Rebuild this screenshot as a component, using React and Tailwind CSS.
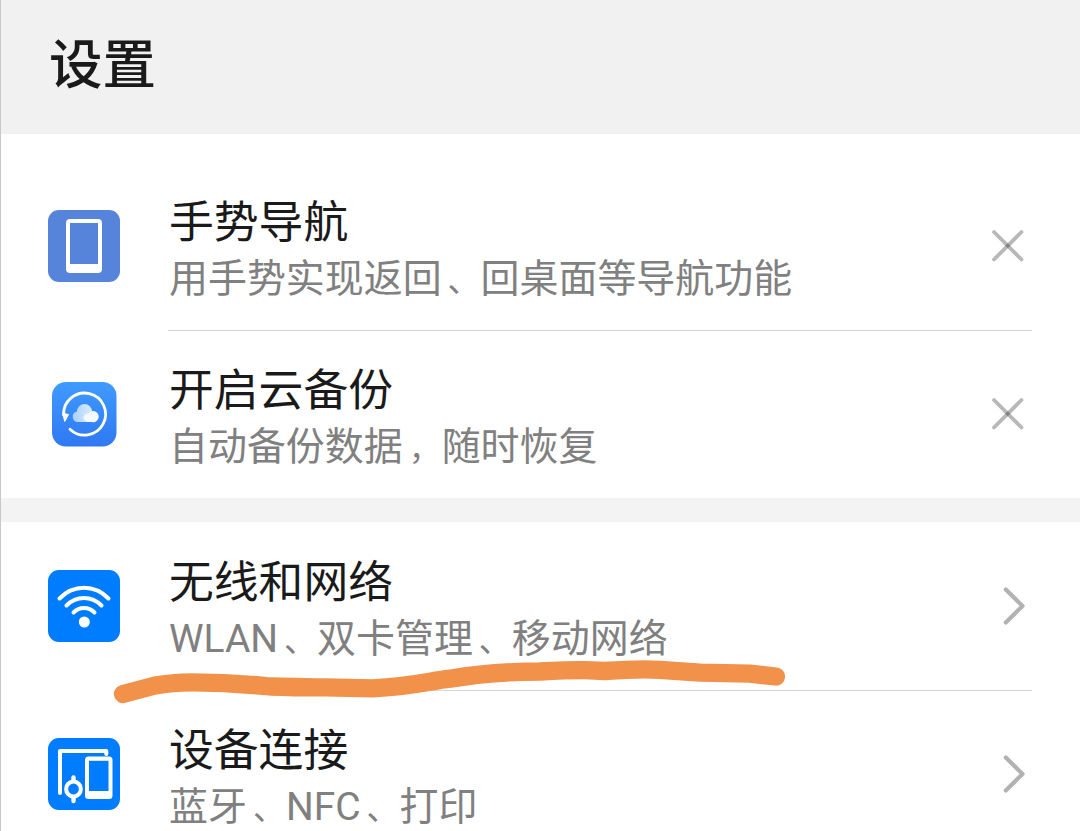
import React from "react";

function PhoneIcon() {
    return (
        <svg viewBox="0 0 72 72" className="w-[72px] h-[72px]">
            <rect width="72" height="72" rx="11" fill="#5684da" />
            <rect x="18" y="9" width="36" height="54" rx="4" fill="#fff" />
            <rect x="22" y="13" width="28" height="41" fill="#5684da" />
        </svg>
    );
}

function CloudIcon() {
    return (
        <svg viewBox="0 0 72 72" className="w-[72px] h-[72px]">
            <defs>
                <linearGradient id="cloudBg" x1="0" y1="0" x2="0" y2="1">
                    <stop offset="0" stopColor="#3f9bff" />
                    <stop offset="1" stopColor="#2f78f2" />
                </linearGradient>
                <linearGradient id="cloudFill" x1="0" y1="0" x2="1" y2="0">
                    <stop offset="0" stopColor="#a9d0ff" />
                    <stop offset="1" stopColor="#d9eaff" />
                </linearGradient>
            </defs>
            <rect x="4" y="4" width="64.5" height="64.5" rx="14" fill="url(#cloudBg)" />
            <path d="M22 51.2 A21 21 0 1 0 15.6 37" fill="none" stroke="#fff" strokeWidth="2.8" strokeLinecap="round" />
            <path d="M14.6 35.5 L20.6 36.4 L16.8 43.4 Z" fill="#fff" stroke="#fff" strokeWidth="1" strokeLinejoin="round" />
            <path d="M30 44 a5.3 5.3 0 0 1 -1 -10.5 a7.5 7.5 0 0 1 15 0 v10.5 Z" fill="url(#cloudFill)" />
            <path d="M40 44 a4.5 4.5 0 0 1 -4 -6.5 q1.5 -2.5 4.5 -2 a5.6 5.6 0 1 1 3 8.5 Z" fill="#f4f9ff" />
        </svg>
    );
}

function WifiIcon() {
    return (
        <svg viewBox="0 0 72 72" className="w-[72px] h-[72px]">
            <rect width="72" height="72" rx="11" fill="#007dff" />
            <g fill="none" stroke="#fff" strokeWidth="4" strokeLinecap="round">
                <path d="M11.5 28.5 C25.5 14.2 46.5 14.2 60.5 28.5" />
                <path d="M18.5 35.5 C28.5 25.5 43.5 25.5 53.5 35.5" />
                <path d="M25.5 42.5 C31.5 36.5 40.5 36.5 46.5 42.5" />
            </g>
            <circle cx="36.3" cy="52" r="5.5" fill="#fff" />
        </svg>
    );
}

function DevicesIcon() {
    return (
        <svg viewBox="0 0 72 72" className="w-[72px] h-[72px]">
            <rect width="72" height="72" rx="11" fill="#007dff" />
            <path d="M12 55 V13 H58.3 V16" fill="none" stroke="#fff" strokeWidth="4" strokeLinecap="round" strokeLinejoin="round" />
            <path d="M25.5 39.5 V63" stroke="#fff" strokeWidth="4.4" strokeLinecap="round" />
            <circle cx="25.5" cy="51" r="7.4" fill="#007dff" stroke="#fff" strokeWidth="4" />
            <rect x="37" y="18.5" width="27.5" height="42.5" rx="3.5" fill="#fff" />
            <rect x="41" y="22.8" width="19.5" height="30.2" fill="#007dff" />
        </svg>
    );
}

function CloseIcon() {
    return (
        <svg viewBox="0 0 48 48" className="w-12 h-12">
            <g stroke="#000" strokeOpacity="0.28" strokeWidth="3.8" strokeLinecap="round">
                <path d="M10 10 L37.5 37.5" />
                <path d="M37.5 10 L10 37.5" />
            </g>
        </svg>
    );
}

function ChevronIcon() {
    return (
        <svg viewBox="0 0 48 48" className="w-12 h-12">
            <path
                d="M21.8 7.5 L38.5 24 L21.8 40.5"
                fill="none"
                stroke="#b2b2b2"
                strokeWidth="4.2"
                strokeLinecap="round"
                strokeLinejoin="round"
            />
        </svg>
    );
}

// Punctuation is drawn a bit smaller and further right in its full-width cell
function Description({ text }) {
    return text.split(/([、，])/).map((part, i) =>
        part === "、" || part === "，" ? (
            <span key={i} className="inline-block w-[39px] pl-[6px] text-[32px] leading-none">{part}</span>
        ) : (
            <span key={i}>{part}</span>
        )
    );
}

function SettingRow({ icon, title, desc, action }) {
    return (
        <div className="flex h-[168px] pl-[47px] pr-12">
            <div className="flex items-center w-[120px] shrink-0">{icon}</div>
            <div className="flex flex-1 items-center justify-between">
                <div className="pt-[11px] pl-px whitespace-nowrap">
                    <div className="text-[44.8px] leading-[56px] text-[#1a1a1a]">{title}</div>
                    <div className="h-14 text-[38.95px] leading-[56px] text-[#808080]">
                        <Description text={desc} />
                    </div>
                </div>
                <button className="block">{action}</button>
            </div>
        </div>
    );
}

function Divider() {
    return <div className="h-px -mb-px ml-[167px] mr-12 bg-[#d6d6d6]" />;
}

function App() {
    return (
        <div className="relative w-[1080px] h-[831px] overflow-hidden bg-white border-l border-[#c8c8c8] font-['Roboto','Noto_Sans_CJK_SC',sans-serif]">
            <header className="h-[133.5px] bg-[#f1f1f1] pl-[48px] pt-[26px]">
                <h1 className="text-[53.5px] leading-[80px] font-medium text-[#1a1a1a]">设置</h1>
            </header>

            <section className="pt-7">
                <SettingRow icon={<PhoneIcon />} title="手势导航" desc="用手势实现返回、回桌面等导航功能" action={<CloseIcon />} />
                <Divider />
                <SettingRow icon={<CloudIcon />} title="开启云备份" desc="自动备份数据，随时恢复" action={<CloseIcon />} />
            </section>

            <div className="h-6 bg-[#f3f3f3]" />

            <section>
                <SettingRow icon={<WifiIcon />} title="无线和网络" desc="WLAN、双卡管理、移动网络" action={<ChevronIcon />} />
                <Divider />
                <SettingRow icon={<DevicesIcon />} title="设备连接" desc="蓝牙、NFC、打印" action={<ChevronIcon />} />
            </section>

            {/* Marker stroke */}
            <svg viewBox="0 0 680 50" className="absolute left-[109px] top-[655px] w-[680px] h-[50px] pointer-events-none">
                <path
                    d="M13 39 L45 30.5 Q62 27.5 82 27.3 Q120 27.5 160 31.5 Q190 32.5 215 32.3 L263 33.3 C300 32 320 26 340 23.7 C365 19.5 395 16.5 430 16.5 Q460 15 475 15.2 L495 16 Q530 13.5 550 14.8 L590 17.6 L640 18.7 L666 21.5"
                    fill="none"
                    stroke="#f2914a"
                    strokeWidth="18.3"
                    strokeLinecap="round"
                    strokeLinejoin="round"
                />
            </svg>
        </div>
    );
}

export default App;
